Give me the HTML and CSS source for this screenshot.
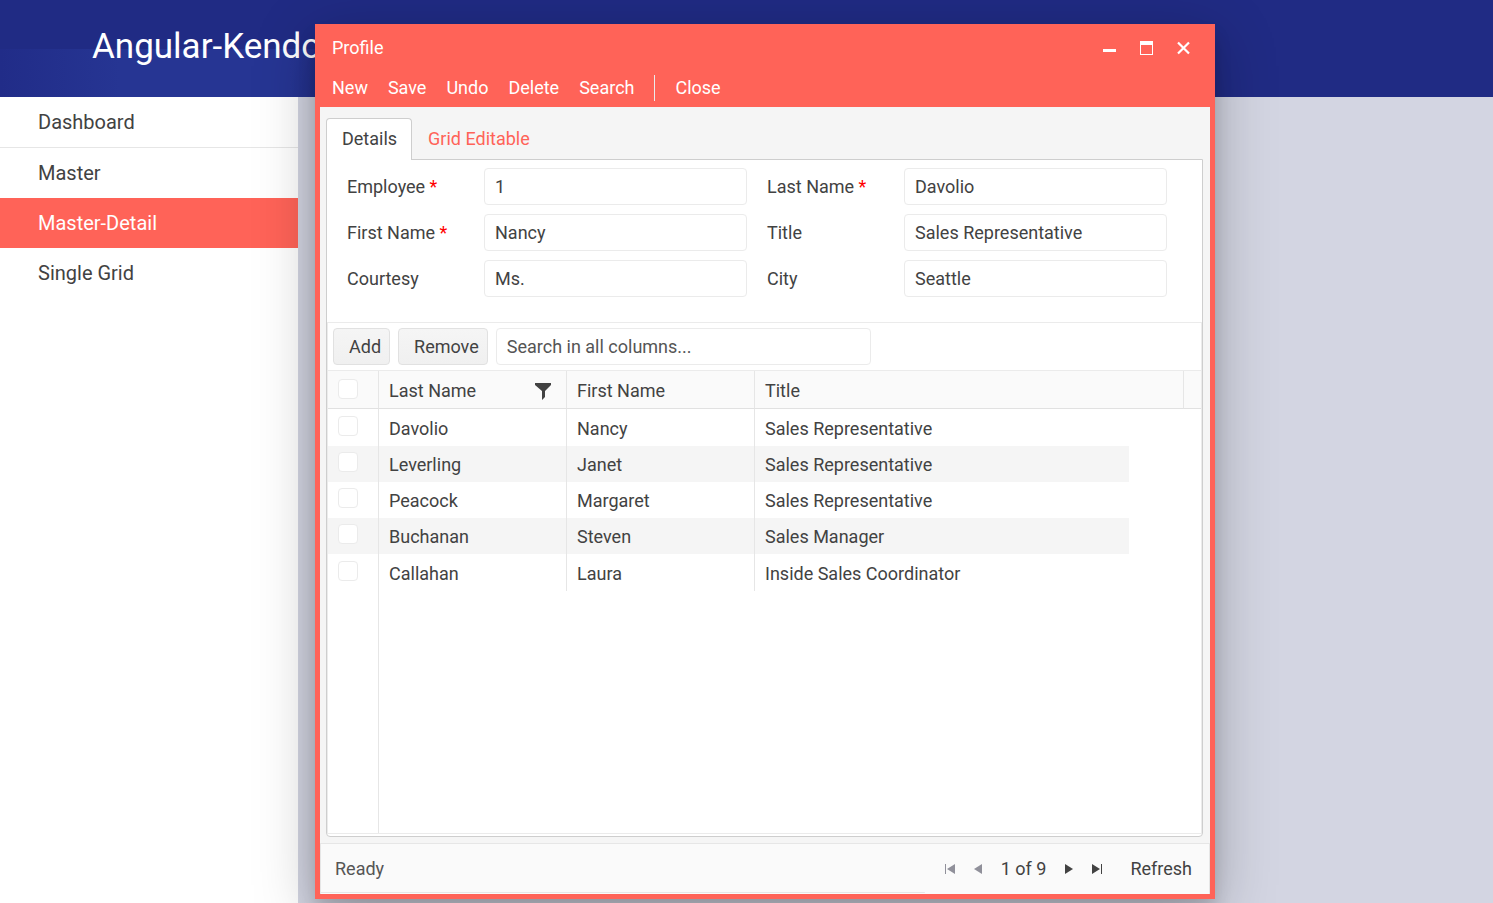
FILE: index.html
```html
<!DOCTYPE html>
<html lang="en">
<head>
    <meta charset="UTF-8">
    <meta name="viewport" content="width=device-width, initial-scale=1.0">
    <title>Angular-Kendo</title>
    <link rel="stylesheet" href="styles.css">
</head>
<body>
    <header class="app-header">
        <h1>Angular-Kendo</h1>
    </header>
    <div class="app-body">
        <nav class="sidebar">
            <a href="#dashboard" class="nav-item divided">Dashboard</a>
            <a href="#master" class="nav-item">Master</a>
            <a href="#master-detail" class="nav-item active">Master-Detail</a>
            <a href="#single-grid" class="nav-item">Single Grid</a>
        </nav>
        <main class="workspace"></main>
    </div>

    <!-- Profile window -->
    <section class="window" role="dialog" aria-labelledby="windowTitle">
        <div class="titlebar">
            <h2 id="windowTitle">Profile</h2>
            <div class="window-actions">
                <button type="button" aria-label="Minimize">
                    <svg width="13" height="14" viewBox="0 0 13 14"><path d="M0 8h13v3H0z" fill="#fff"/></svg>
                </button>
                <button type="button" aria-label="Maximize">
                    <svg width="13" height="14" viewBox="0 0 13 14"><path d="M0 0h13v14H0zM1 4v9h11V4z" fill="#fff" fill-rule="evenodd"/></svg>
                </button>
                <button type="button" aria-label="Close window">
                    <svg width="13" height="14" viewBox="0 0 13 14"><path d="M1 1.500l11 11M12 1.500l-11 11" stroke="#fff" stroke-width="2.200" fill="none"/></svg>
                </button>
            </div>
        </div>
        <div class="menu">
            <button type="button">New</button>
            <button type="button">Save</button>
            <button type="button">Undo</button>
            <button type="button">Delete</button>
            <button type="button">Search</button>
            <span class="separator"></span>
            <button type="button">Close</button>
        </div>

        <div class="window-content">
            <div class="tabs" role="tablist">
                <button type="button" class="tab selected" role="tab" aria-selected="true">Details</button>
                <button type="button" class="tab" role="tab" aria-selected="false">Grid Editable</button>
            </div>
            <div class="tab-panel" role="tabpanel">
                <form class="details">
                    <label for="employee">Employee <span class="required">*</span></label>
                    <input type="text" id="employee" value="1">
                    <label for="lastName">Last Name <span class="required">*</span></label>
                    <input type="text" id="lastName" value="Davolio">
                    <label for="firstName">First Name <span class="required">*</span></label>
                    <input type="text" id="firstName" value="Nancy">
                    <label for="title">Title</label>
                    <input type="text" id="title" value="Sales Representative">
                    <label for="courtesy">Courtesy</label>
                    <input type="text" id="courtesy" value="Ms.">
                    <label for="city">City</label>
                    <input type="text" id="city" value="Seattle">
                </form>

                <div class="grid">
                    <div class="grid-toolbar">
                        <button type="button">Add</button>
                        <button type="button">Remove</button>
                        <input type="text" placeholder="Search in all columns..." aria-label="Search in all columns">
                    </div>
                    <table>
                        <colgroup>
                            <col class="col-check">
                            <col class="col-name">
                            <col class="col-name">
                            <col>
                            <col class="col-spare">
                            <col class="col-scroll">
                        </colgroup>
                        <thead>
                            <tr>
                                <th class="check"><input type="checkbox" aria-label="Select all"></th>
                                <th>
                                    <div class="filter-head">
                                        Last Name
                                        <svg width="18" height="18" viewBox="0 0 18 18"><path d="M1 1h16v2l-6 6v6l-3 3V9L1 3z" fill="#424242"/></svg>
                                    </div>
                                </th>
                                <th>First Name</th>
                                <th colspan="2">Title</th>
                                <th></th>
                            </tr>
                        </thead>
                        <tbody>
                            <tr>
                                <td class="check"><input type="checkbox" aria-label="Select Davolio"></td>
                                <td>Davolio</td>
                                <td>Nancy</td>
                                <td>Sales Representative</td>
                            </tr>
                            <tr>
                                <td class="check"><input type="checkbox" aria-label="Select Leverling"></td>
                                <td>Leverling</td>
                                <td>Janet</td>
                                <td>Sales Representative</td>
                            </tr>
                            <tr>
                                <td class="check"><input type="checkbox" aria-label="Select Peacock"></td>
                                <td>Peacock</td>
                                <td>Margaret</td>
                                <td>Sales Representative</td>
                            </tr>
                            <tr>
                                <td class="check"><input type="checkbox" aria-label="Select Buchanan"></td>
                                <td>Buchanan</td>
                                <td>Steven</td>
                                <td>Sales Manager</td>
                            </tr>
                            <tr>
                                <td class="check"><input type="checkbox" aria-label="Select Callahan"></td>
                                <td>Callahan</td>
                                <td>Laura</td>
                                <td>Inside Sales Coordinator</td>
                            </tr>
                        </tbody>
                    </table>
                    <div class="grid-rest"></div>
                </div>
            </div>
        </div>

        <div class="statusbar">
            <span class="status">Ready</span>
            <div class="pager">
                <button type="button" aria-label="First" disabled>
                    <svg width="10" height="10" viewBox="0 0 10 10"><path d="M0 0h1v10H0zM10 0v10L2 5z"/></svg>
                </button>
                <button type="button" aria-label="Previous" disabled>
                    <svg width="10" height="10" viewBox="0 0 10 10"><path d="M9 0v10L1 5z"/></svg>
                </button>
                <span>1 of 9</span>
                <button type="button" aria-label="Next">
                    <svg width="10" height="10" viewBox="0 0 10 10"><path d="M1 0v10l8-5z"/></svg>
                </button>
                <button type="button" aria-label="Last">
                    <svg width="10" height="10" viewBox="0 0 10 10"><path d="M0 0v10l8-5zM9 0h1v10H9z"/></svg>
                </button>
                <button type="button" class="refresh">Refresh</button>
            </div>
        </div>
    </section>
</body>
</html>
```

FILE: styles.css
```css
* {
    box-sizing: border-box;
}
body {
    margin: 0;
    min-height: 100vh;
    display: flex;
    flex-direction: column;
    font-family: Roboto, "Liberation Sans", sans-serif;
    font-size: 18px;
    line-height: 24px;
    color: #424242;
    overflow: hidden;
}
button, input {
    font: inherit;
    color: inherit;
    margin: 0;
}
button {
    background: none;
    border: none;
    padding: 0;
    cursor: pointer;
}
.app-header {
    height: 97px;
    padding: 0 0 3px 92px;
    display: flex;
    align-items: center;
    background-color: #202b84;
    background-image: linear-gradient(90deg, #212c88 0, #263593 120px, #263593 290px, #202b84 340px);
    background-repeat: no-repeat;
    background-position: 0 49px;
    background-size: 340px 48px;
}
.app-header h1 {
    margin: 0;
    color: white;
    font-size: 35px;
    font-weight: 400;
    line-height: 48px;
}
.app-body {
    flex: 1;
    display: flex;
}
.sidebar {
    width: 298px;
    background-color: white;
}
.workspace {
    flex: 1;
    background-color: #d3d5e2;
}
.nav-item {
    display: block;
    padding: 13px 38px;
    font-size: 20px;
    color: #424242;
    text-decoration: none;
}
.nav-item.divided {
    border-bottom: 1px solid #e6e6e6;
}
.nav-item.active {
    background-color: #ff6358;
    color: white;
}

/* window */
.window {
    position: absolute;
    top: 24px;
    bottom: 4px;
    left: 315px;
    width: 900px;
    display: flex;
    flex-direction: column;
    border: 5px solid #ff6358;
    border-top: none;
    background-color: #f5f5f5;
    box-shadow: 0 12px 16px rgba(0,0,0,0.14), 0 14px 56px rgba(0,0,0,0.26);
}
.titlebar {
    display: flex;
    justify-content: space-between;
    align-items: center;
    padding: 12px 20px 12px 12px;
    background-color: #ff6358;
    color: white;
}
.titlebar h2 {
    margin: 0;
    font-size: 18px;
    font-weight: 400;
}
.window-actions {
    display: flex;
    gap: 24px;
}
.window-actions button {
    display: flex;
}
.menu {
    display: flex;
    align-items: center;
    gap: 20px;
    padding: 3px 12px 6px;
    background-color: #ff6358;
    color: white;
}
.separator {
    width: 1px;
    height: 26px;
    background-color: #ebebeb;
}
.window-content {
    flex: 1;
    display: flex;
    flex-direction: column;
    padding: 11px 7px 6px 6px;
}
.tabs {
    display: flex;
}
.tab {
    height: 42px;
    padding: 0 14px 2px 15px;
    border: 1px solid transparent;
    border-bottom: none;
    color: #ff6358;
}
.tab.selected {
    z-index: 1;
    background-color: white;
    border-color: #cecece;
    border-radius: 4px 4px 0 0;
    color: #424242;
}
.tab-panel {
    flex: 1;
    display: flex;
    flex-direction: column;
    margin-top: -1px;
    padding-bottom: 2px;
    border: 1px solid #cecece;
    border-radius: 0 0 4px 4px;
    background-color: white;
}
.details {
    display: grid;
    grid-template-columns: 117px 1fr 117px 1fr;
    gap: 9px 20px;
    align-items: center;
    padding: 8px 35px 25px 20px;
}
input[type="text"] {
    width: 100%;
    height: 37px;
    padding: 0 10px;
    border: 1px solid #ebebeb;
    border-radius: 4px;
    background-color: white;
}
.required {
    color: red;
}

/* grid */
.grid {
    flex: 1;
    display: flex;
    flex-direction: column;
    border: 1px solid #ebebeb;
}
.grid-toolbar {
    display: flex;
    gap: 8px;
    padding: 5px;
    border-bottom: 1px solid #ebebeb;
}
.grid-toolbar button {
    height: 37px;
    padding: 0 8px 0 15px;
    border: 1px solid #e1e1e1;
    border-radius: 4px;
    background-image: linear-gradient(#f5f5f5, #f0f0f0);
}
.grid-toolbar input[type="text"] {
    width: 375px;
}
.grid-toolbar input::placeholder {
    color: #555;
    opacity: 1;
}
table {
    width: 100%;
    table-layout: fixed;
    border-collapse: separate;
    border-spacing: 0;
}
.col-check {
    width: 51px;
}
.col-name {
    width: 188px;
}
.col-spare {
    width: 55px;
}
.col-scroll {
    width: 17px;
}
th, td {
    height: 36px;
    padding: 2px 10px 0;
    border-right: 1px solid #e6e6e6;
    font-weight: 400;
    text-align: left;
}
th {
    height: 38px;
    background-color: #fafafa;
    border-bottom: 1px solid #e1e1e1;
}
th:last-child, td:last-child {
    border-right: none;
}
tbody tr:first-child td, tbody tr:last-child td {
    height: 37px;
}
tbody tr:nth-child(even) td {
    background-color: #f5f5f5;
}
.check {
    padding-top: 0;
    padding-bottom: 4px;
}
th.check {
    padding-bottom: 1px;
}
input[type="checkbox"] {
    appearance: none;
    display: block;
    width: 20px;
    height: 20px;
    border: 1px solid #ebebeb;
    border-radius: 4px;
    background-color: white;
}
.filter-head {
    display: flex;
    justify-content: space-between;
    align-items: center;
    padding-right: 4px;
}
.grid-rest {
    flex: 1;
    width: 51px;
    border-right: 1px solid #e6e6e6;
}

/* status bar */
.statusbar {
    display: flex;
    justify-content: space-between;
    align-items: center;
    height: 51px;
    padding: 0 17px 0 14px;
    border: 1px solid #e6e6e6;
    border-bottom: none;
    background: #fafafa linear-gradient(#e6e6e6, #e6e6e6) no-repeat 0 48px / 68% 1px;
}
.status {
    color: #555;
}
.pager {
    display: flex;
    align-items: center;
    gap: 18px;
}
.pager button svg {
    display: block;
    fill: #424242;
}
.pager button:disabled svg {
    fill: #90909a;
}
.pager .refresh {
    margin-left: 10px;
}
```
